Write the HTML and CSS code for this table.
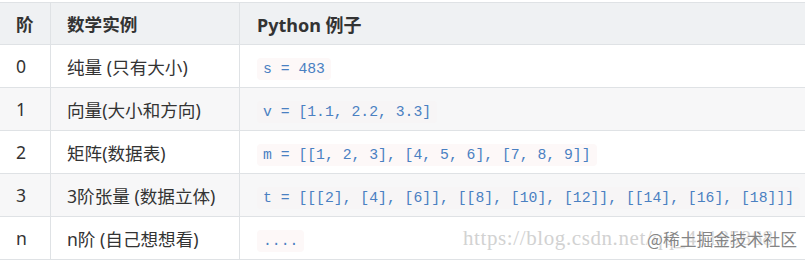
FILE: index.html
```html
<!DOCTYPE html>
<html lang="zh-CN">
<head>
<meta charset="utf-8">
<link rel="stylesheet" href="styles.css">
</head>
<body>
<div class="wrap">
  <table class="tbl">
    <thead>
      <tr><th class="c1">阶</th><th class="c2">数学实例</th><th class="c3">Python 例子</th></tr>
    </thead>
    <tbody>
      <tr><td>0</td><td>纯量 (只有大小)</td><td><code>s = 483</code></td></tr>
      <tr><td>1</td><td>向量(大小和方向)</td><td><code>v = [1.1, 2.2, 3.3]</code></td></tr>
      <tr><td>2</td><td>矩阵(数据表)</td><td><code>m = [[1, 2, 3], [4, 5, 6], [7, 8, 9]]</code></td></tr>
      <tr><td>3</td><td>3阶张量 (数据立体)</td><td><code>t = [[[2], [4], [6]], [[8], [10], [12]], [[14], [16], [18]]]</code></td></tr>
      <tr><td>n</td><td>n阶 (自己想想看)</td><td><code>....</code></td></tr>
    </tbody>
  </table>
  <div class="wm-url">https://blog.csdn.net/qq_41185868</div>
  <div class="wm-brand">@稀土掘金技术社区</div>
</div>
</body>
</html>
```

FILE: styles.css
```css
html, body {
  margin: 0;
  padding: 0;
  background: #ffffff;
}
body {
  overflow: hidden;
  width: 805px;
  height: 262px;
}
.wrap {
  position: relative;
  padding-top: 2px;
}
.tbl {
  border-collapse: collapse;
  margin-left: -1px;
  width: 830px;
  font-family: "Noto Sans", "Noto Sans CJK SC", sans-serif;
  font-size: 17.6px;
  color: #333333;
  table-layout: fixed;
}
.c1 { width: 34px; }
.c2 { width: 172px; }
.tbl th, .tbl td {
  border: 1px solid #dfe2e5;
  text-align: left;
  padding: 0 0 0 16px;
  white-space: nowrap;
  vertical-align: middle;
}
.tbl th {
  height: 41px;
  background: #eff1f3;
  font-weight: 700;
}
.tbl th.c3 { font-size: 18px; }
.tbl td {
  height: 42px;
}
.tbl td:nth-child(3), .tbl th:nth-child(3) { padding-left: 17px; }
.tbl tbody tr:nth-child(even) td {
  background: #f7f7f8;
}
.tbl code {
  font-family: "Liberation Mono", "DejaVu Sans Mono", monospace;
  font-size: 14.75px;
  color: #4a80c2;
  background: rgba(250, 232, 232, 0.3);
  border-radius: 4px;
  padding: 3px 6px;
}
.tbl tbody tr:nth-child(even) code {
  background: rgba(250, 232, 232, 0.15);
}
.wm-url {
  position: absolute;
  left: 463px;
  top: 226px;
  font-family: "Liberation Serif", serif;
  font-size: 21px;
  letter-spacing: 0.6px;
  color: #d2d2d2;
  white-space: nowrap;
}
.wm-brand {
  position: absolute;
  left: 647px;
  top: 227px;
  font-family: "Noto Sans CJK SC", sans-serif;
  font-size: 16.8px;
  color: #858585;
  white-space: nowrap;
  text-shadow: 0 0 2px #ffffff, 0 0 2px #ffffff;
}
```
